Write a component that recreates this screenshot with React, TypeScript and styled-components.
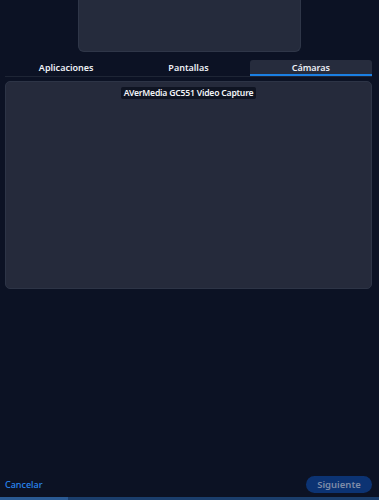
import styled, { createGlobalStyle } from "styled-components";

const GlobalStyle = createGlobalStyle`
    html, body {
        margin: 0;
        padding: 0;
        background: #0c1224;
    }
    body {
        font-family: "Noto Sans", "Open Sans", sans-serif;
    }
`;

const Page = styled.div`
    width: 379px;
    height: 500px;
    display: flex;
    flex-direction: column;
    background: #0c1224;
    box-sizing: border-box;
    overflow: hidden;
`;

const Preview = styled.div`
    align-self: center;
    width: 223px;
    height: 52px;
    box-sizing: border-box;
    background: #252b3c;
    border: 1px solid #2f3648;
    border-top: none;
    border-radius: 0 0 6px 6px;
    flex-shrink: 0;
`;

const Tabs = styled.div`
    margin: 8px 7px 0 5px;
    display: grid;
    grid-template-columns: repeat(3, 1fr);
    border-bottom: 1px solid #1e2535;
`;

const Tab = styled.div<{ $active?: boolean }>`
    height: 16px;
    display: flex;
    align-items: center;
    justify-content: center;
    font-size: 9px;
    font-weight: 600;
    color: #eef1f6;
    box-sizing: border-box;
    background: ${(p) => (p.$active ? "#262c3d" : "transparent")};
    border-bottom: 2px solid ${(p) => (p.$active ? "#1b80e4" : "transparent")};
    border-radius: 3px 3px 0 0;
    padding-top: 1px;
`;

const Panel = styled.div`
    margin: 4px 7px 0 5px;
    height: 208px;
    box-sizing: border-box;
    background: #252a3b;
    border: 1px solid #2d3446;
    border-radius: 5px;
    display: flex;
    justify-content: center;
    align-items: flex-start;
    padding-top: 5px;
`;

const DeviceLabel = styled.span`
    background: #0f1422;
    color: #f3f5f9;
    font-size: 8.6px;
    letter-spacing: -0.2px;
    font-weight: 600;
    line-height: 12px;
    padding: 0 3px;
    border-radius: 2px;
`;

const Spacer = styled.div`
    flex: 1;
`;

const Footer = styled.div`
    display: flex;
    align-items: center;
    justify-content: space-between;
    padding: 0 7px 0 5px;
    height: 18px;
    margin-bottom: 3px;
`;

const LinkButton = styled.span`
    color: #2a86f0;
    font-size: 9px;
    font-weight: 500;
`;

const NextButton = styled.div`
    width: 66px;
    height: 17px;
    border-radius: 9px;
    background: #0c3373;
    color: #7f8ca8;
    font-size: 9.5px;
    font-weight: 600;
    display: flex;
    align-items: center;
    justify-content: center;
`;

const Progress = styled.div`
    height: 3px;
    background: #1b3e6c;
    display: flex;
    margin-top: 1px;
`;

const ProgressFill = styled.div`
    background: #2a5a94;
    height: 100%;
`;

export default function App() {
    return (
        <Page>
            <GlobalStyle />
            <Preview />
            <Tabs>
                <Tab>Aplicaciones</Tab>
                <Tab>Pantallas</Tab>
                <Tab $active>Cámaras</Tab>
            </Tabs>
            <Panel>
                <DeviceLabel>AVerMedia GC551 Video Capture</DeviceLabel>
            </Panel>
            <Spacer />
            <Footer>
                <LinkButton>Cancelar</LinkButton>
                <NextButton>Siguiente</NextButton>
            </Footer>
            <Progress>
                <ProgressFill style={{ width: "18%" }} />
            </Progress>
        </Page>
    );
}
